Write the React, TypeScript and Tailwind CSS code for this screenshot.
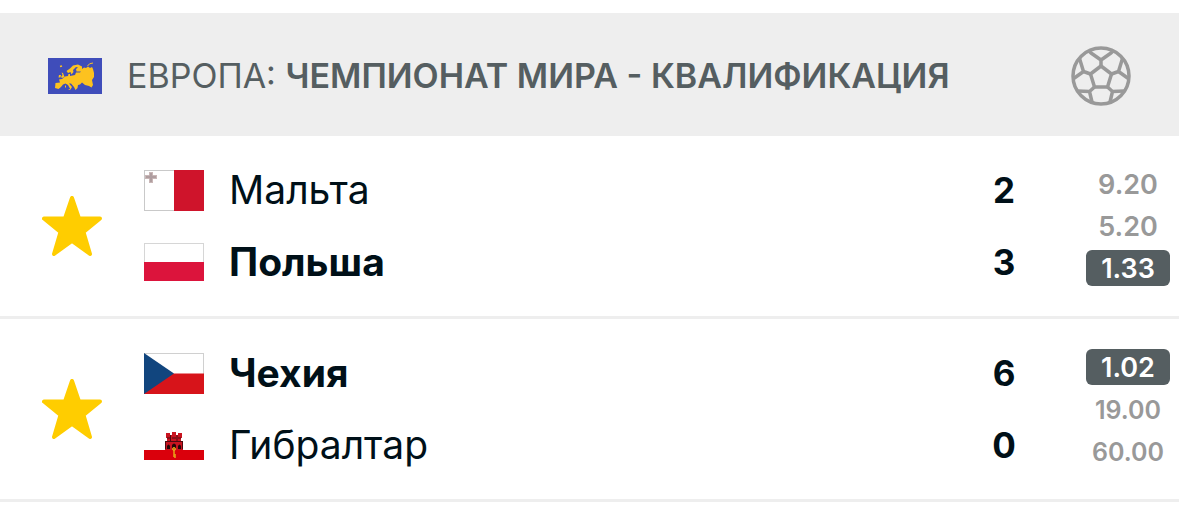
import React from "react";

type Team = { name: string; score: number; winner: boolean; flag: React.ReactNode };
type Match = { teams: Team[]; odds: { value: string; won: boolean }[] };

function EuropeFlag() {
  return (
    <svg viewBox="0 0 54 36" className="h-9 w-[54px] shrink-0" aria-hidden="true">
      <rect width="54" height="36" fill="#3f4dba" />
      <path
        fill="#fdc21f"
        d="M7.500 25L12 24.500L11 21.500L14 21L17 18.500L20 18L20.500 16L22 16L22 18L27 17L28 14.500L32 14.500L33 13.500L28.500 13.500L28 11L30 9.500L28 9L25 12L25.500 14L23.500 16.500L22.500 14L20 15L18.500 13L22 10.500L25 7.500L30 6.500L34 8.500L34 11L36 9.500L38 10L40 8.500L42 10L44 9L45 11L46 15L46 19L44 22L45 27L43.500 29.500L41 28L37 27L34 24.500L32 26.500L30 27L29.500 30L27.500 32L26 29L23 25.500L21 25.500L24 29L22.500 31.500L20 27L17.500 25.500L15 26.500L13 29L10.500 31L7 30z"
      />
      <path fill="#fdc21f" d="M13.500 14.500L15 15L16.500 19L14 20L13 19L14.500 17zM11 17h2l-.500 2.500H10.500zM17 27.500h1v2h-1zM20 31h2.500l-.500 1z" />
      <path d="M39.500 8Q41 5 45 5" fill="none" stroke="#fdc21f" strokeWidth="1" />
      <path d="M12 8.500l2-.500" stroke="#fdc21f" strokeWidth="1.500" />
    </svg>
  );
}

function MaltaFlag() {
  return (
    <svg viewBox="0 0 60 41" className="h-[41px] w-[60px]" aria-hidden="true">
      <rect x=".5" y=".5" width="59" height="40" fill="#fff" stroke="#c9c9c9" />
      <rect x="30" width="30" height="41" fill="#cf142b" />
      <path d="M5 2h4v3h4v4h-4v4H5V9H1V5h4z" fill="#c9b7b7" />
      <path d="M7 3v9M2 7h10" stroke="#958487" strokeWidth="1" />
      <circle cx="7" cy="7" r="2" fill="#ae9da0" />
    </svg>
  );
}

function PolandFlag() {
  return (
    <svg viewBox="0 0 60 38" className="h-[38px] w-[60px]" aria-hidden="true">
      <rect x=".5" y=".5" width="59" height="37" fill="#fff" stroke="#d6d6d6" />
      <rect y="19" width="60" height="19" fill="#dc143c" />
    </svg>
  );
}

function CzechFlag() {
  return (
    <svg viewBox="0 0 60 41" className="h-[41px] w-[60px]" aria-hidden="true">
      <rect x=".5" y=".5" width="59" height="40" fill="#fff" stroke="#d0d0d0" />
      <path d="M0 20.500H60V41H0z" fill="#d7141a" />
      <path d="M0 0L30 20.500L0 41z" fill="#11457e" />
    </svg>
  );
}

function GibraltarFlag() {
  return (
    <svg viewBox="0 0 60 30" className="h-[30px] w-[60px]" aria-hidden="true">
      <rect width="60" height="30" fill="#fff" />
      <rect y="20" width="60" height="10" fill="#da000c" />
      <path d="M22 3h4v2h2V2h4v3h2V3h4v5h-1v3h2v9H21v-9h2V8h-1z" fill="#c91420" />
      <path d="M21.500 11v8M38.500 11v8M21 11.500h18M23 8h3M28 8h4M34 8h3M26.500 5v6M33 5v6" stroke="#4d0a10" strokeWidth="1" />
      <path d="M23 19v-3q1.500-3 3 0v3zM28 19v-4q2-3 4 0v4zM34 19v-3q1.500-3 3 0v3z" fill="#240608" />
      <path d="M30 18v9M30 25h2M30 27h2" stroke="#e8a218" strokeWidth="1.500" />
      <circle cx="30" cy="19" r="1.500" fill="none" stroke="#e8a218" />
    </svg>
  );
}

function BallIcon() {
  return (
    <svg viewBox="0 0 60 60" className="size-[60px] shrink-0" fill="none" stroke="#999" strokeWidth="3.500" strokeLinejoin="round" aria-hidden="true">
      <circle cx="30" cy="30" r="28" />
      <path d="M30 20L40.500 28L36.500 41H23.500L19.500 28z" />
      <path d="M30 20V14L20 7L18 5M30 14L40 7L42 5" />
      <path d="M19.500 28L12.500 25.500L8.500 12.500M12.500 25.500L2 33M40.500 28L47.500 25.500L51.500 12.500M47.500 25.500L58 33" />
      <path d="M23.500 41L18.500 45.500L7 45M18.500 45.500L21 56M36.500 41L41.500 45.500L53 45M41.500 45.500L39 56" />
    </svg>
  );
}

function StarIcon() {
  return (
    <svg viewBox="0 0 60 60" className="size-[60px]" aria-hidden="true">
      <path
        d="M30 2L37 22.500H58L41.500 36L48 58L30 45L12 58L18.500 36L2 22.500H23z"
        fill="#ffcd00"
        stroke="#ffcd00"
        strokeWidth="4"
        strokeLinejoin="round"
      />
    </svg>
  );
}

const matches: Match[] = [
  {
    teams: [
      { name: "Мальта", score: 2, winner: false, flag: <MaltaFlag /> },
      { name: "Польша", score: 3, winner: true, flag: <PolandFlag /> },
    ],
    odds: [
      { value: "9.20", won: false },
      { value: "5.20", won: false },
      { value: "1.33", won: true },
    ],
  },
  {
    teams: [
      { name: "Чехия", score: 6, winner: true, flag: <CzechFlag /> },
      { name: "Гибралтар", score: 0, winner: false, flag: <GibraltarFlag /> },
    ],
    odds: [
      { value: "1.02", won: true },
      { value: "19.00", won: false },
      { value: "60.00", won: false },
    ],
  },
];

function MatchRow({ match }: { match: Match }) {
  return (
    <li className="flex items-center border-b-[3px] border-[#eee] py-[18px] pr-[9px] pl-[42px]">
      <button type="button" aria-label="Избранное" aria-pressed="true" className="mr-[42px] shrink-0">
        <StarIcon />
      </button>
      <div className="min-w-0 flex-1">
        {match.teams.map((team) => (
          <div key={team.name} className="flex h-[72px] items-center text-[39px] text-[#001018]">
            <span className="mr-[25px] shrink-0">{team.flag}</span>
            <span className={team.winner ? "font-bold" : "font-normal"}>{team.name}</span>
            <span className="ml-auto w-10 pt-px text-center text-[35px] font-bold">{team.score}</span>
          </div>
        ))}
      </div>
      <div className="ml-[62px] flex w-[84px] shrink-0 flex-col gap-[6px] text-center leading-9 font-semibold">
        {match.odds.map((odd) => (
          <span
            key={odd.value}
            className={`h-9 pt-px ${odd.value.length > 4 ? "text-[25px]" : "text-[27px]"} ${
              odd.won ? "rounded-md bg-[#555e61] text-white" : "text-[#999]"
            }`}
          >
            {odd.value}
          </span>
        ))}
      </div>
    </li>
  );
}

export default function App() {
  return (
    <main className="bg-white pt-[13px] font-['Inter','Noto_Sans',sans-serif]">
      <header className="flex h-[123px] items-center bg-[#eee] px-12 pt-[2px]">
        <EuropeFlag />
        <h1 className="ml-[25px] flex-1 text-[34px] whitespace-nowrap text-[#555e61]">
          ЕВРОПА: <strong className="font-semibold">ЧЕМПИОНАТ МИРА - КВАЛИФИКАЦИЯ</strong>
        </h1>
        <BallIcon />
      </header>
      <ul>
        {matches.map((match) => (
          <MatchRow key={match.teams[0].name} match={match} />
        ))}
      </ul>
    </main>
  );
}
